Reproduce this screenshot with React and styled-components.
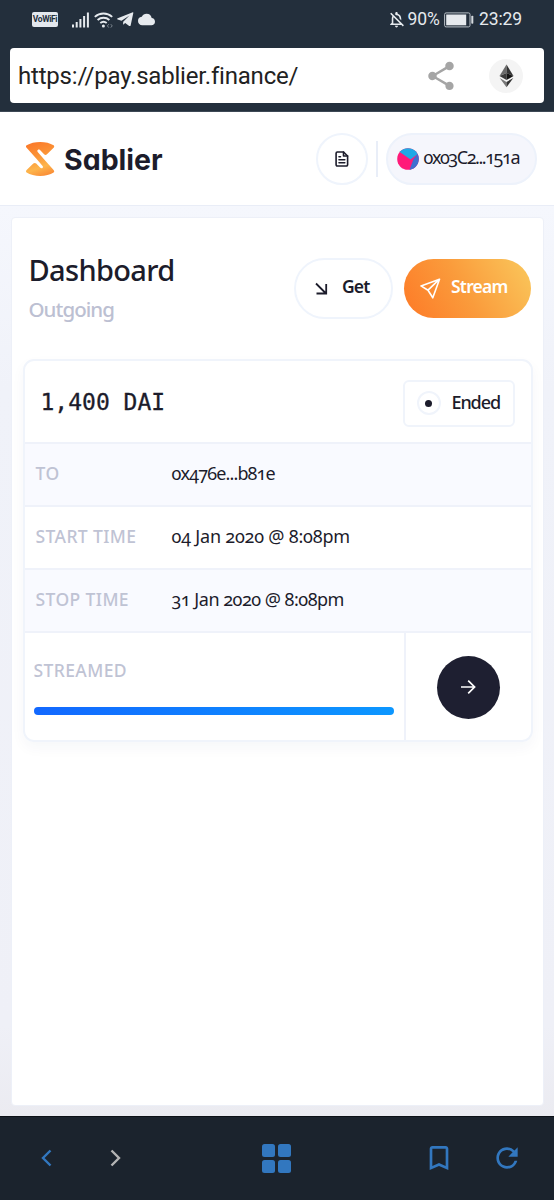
import React from "react";
import styled, { createGlobalStyle, css } from "styled-components";
import {
  MdOutlineNotificationsOff,
  MdShare,
  MdBookmarkBorder,
  MdRefresh,
  MdCloud,
} from "react-icons/md";

const GlobalStyle = createGlobalStyle`
  * {
    box-sizing: border-box;
  }
  body {
    margin: 0;
    background: #f5f7fd;
    font-family: "Noto Sans", "Open Sans", sans-serif;
    color: #1c1c2b;
  }
`;

const Screen = styled.div`
  width: 554px;
  height: 1200px;
  display: flex;
  flex-direction: column;
  overflow: hidden;
`;

const Label = styled.span`
  display: block;
  white-space: nowrap;
  line-height: 1;
  font-size: ${(p) => p.$size || 18}px;
  font-weight: ${(p) => p.$weight || 400};
  letter-spacing: ${(p) => p.$spacing || 0}px;
  color: ${(p) => p.$color || "#1c1c2b"};
  ${(p) =>
    p.$oldstyle &&
    css`
      font-variant-numeric: oldstyle-nums;
    `}
`;

/* ---- browser chrome ---- */

const BrowserTop = styled.div`
  height: 112px;
  flex: none;
  background: #232f3c;
  border-bottom: 1px solid #3d4855;
`;

const StatusBar = styled.div`
  height: 48px;
  padding: 0 32px 9px 32px;
  display: flex;
  align-items: center;
  justify-content: space-between;
  font-family: Roboto, sans-serif;
  color: #e6eaee;

  svg {
    display: block;
  }
`;

const StatusGroup = styled.div`
  display: flex;
  align-items: center;
`;

const VoWifi = styled.div`
  width: 26px;
  height: 15px;
  margin-right: 14px;
  border-radius: 2px;
  background: #e3e8ee;
  color: #232f3c;
  font-size: 8.5px;
  font-weight: 700;
  line-height: 15px;
  text-align: center;
  letter-spacing: -0.4px;
  white-space: nowrap;
`;

const UrlBar = styled.div`
  height: 55px;
  margin: 0 10px;
  padding: 0 21px 0 8px;
  display: flex;
  align-items: center;
  border-radius: 4px;
  background: #fff;
  font-family: Roboto, sans-serif;
`;

const Url = styled(Label)`
  flex: 1;
  padding-top: 1px;
`;

const EthBadge = styled.div`
  width: 34px;
  height: 34px;
  margin-left: 31px;
  border-radius: 50%;
  background: #f4f4f4;
  display: flex;
  align-items: center;
  justify-content: center;
`;

const BrowserNav = styled.div`
  height: 84px;
  flex: none;
  padding: 0 31px 1px 40px;
  display: flex;
  align-items: center;
  background: #1b232d;
  border-top: 1px solid #0c1117;

  svg {
    display: block;
  }
`;

const NavGap = styled.div`
  width: ${(p) => p.$w}px;
  flex: none;
`;

const Tabs = styled.div`
  display: grid;
  grid-template-columns: 13px 13px;
  grid-auto-rows: 13px;
  gap: 3px;
`;

const Tab = styled.div`
  border-radius: 2.5px;
  background: #3277bf;
`;

/* ---- site ---- */

const Header = styled.header`
  height: 94px;
  flex: none;
  padding: 0 17.5px 0 25px;
  display: flex;
  align-items: center;
  background: #fff;
  border-bottom: 1px solid #e9edf7;
`;

const Brand = styled.div`
  flex: 1;
  display: flex;
  align-items: center;
  gap: 9px;
`;

const BrandName = styled(Label)`
  padding-top: 3px;
  font-family: Inter, sans-serif;
  font-feature-settings: "cv11", "ss03";
`;

const RoundButton = styled.div`
  width: 52px;
  height: 52px;
  display: flex;
  align-items: center;
  justify-content: center;
  border: 2px solid #eff4fc;
  border-radius: 50%;
`;

const Divider = styled.div`
  width: 1.5px;
  height: 36px;
  margin: 0 8px 0 8px;
  background: #e9eef8;
`;

const Account = styled.div`
  width: 151px;
  height: 52px;
  padding-left: 9px;
  display: flex;
  align-items: center;
  gap: 5px;
  border: 2px solid #edf2fb;
  border-radius: 26px;
  background: #f5f6fc;
`;

const AccountName = styled(Label)`
  padding-bottom: 3px;
`;

const Body = styled.main`
  flex: 1;
  min-height: 0;
  padding: 11px 10px 10px 11px;
  background: linear-gradient(#f5f7fd, #f0f2f9 20%, #eff0f7 90%, #ebebf1);
`;

const Panel = styled.section`
  height: 889px;
  padding: 40px 10.5px 0;
  background: #fff;
  border: 1px solid #edf0f8;
  border-radius: 4px;
`;

const TitleRow = styled.div`
  display: flex;
  align-items: flex-start;
  padding: 0 1.5px 0 6px;
  height: 101px;
`;

const Titles = styled.div`
  flex: 1;
  display: flex;
  flex-direction: column;
  gap: 15px;
  margin-top: -3px;
`;

const Pill = styled.div`
  display: flex;
  align-items: center;
  border-radius: 31px;

  ${Label} {
    padding-bottom: 3px;
  }

  ${(p) =>
    p.$primary
      ? css`
          width: 127px;
          height: 59px;
          margin: 1px 0 0 11px;
          padding: 0 0 0 16px;
          gap: 10px;
          background: linear-gradient(60deg, #fd7f2a 8%, #fa9c3c 48%, #fac85c);
        `
      : css`
          width: 99px;
          height: 61px;
          padding: 0 0 0 19px;
          gap: 14px;
          border: 2px solid #eff4fc;
        `}
`;

const Card = styled.div`
  height: 383px;
  border: 2px solid #f0f4fb;
  border-radius: 11px;
  box-shadow: 0 6px 14px rgba(30, 50, 90, 0.04);
  overflow: hidden;
`;

const CardHead = styled.div`
  height: 81px;
  padding: 3px 16px 0 16px;
  display: flex;
  align-items: center;
  justify-content: space-between;
`;

const Amount = styled(Label)`
  padding-bottom: 2px;
  font-family: "DejaVu Sans Mono", monospace;
  -webkit-text-stroke: 0.3px currentColor;
`;

const Status = styled.div`
  width: 112px;
  height: 47px;
  padding-left: 12px;
  display: flex;
  align-items: center;
  gap: 11px;
  border: 2px solid #f0f4fb;
  border-radius: 6px;

  ${Label} {
    padding-bottom: 3px;
  }
`;

const Ring = styled.div`
  width: 24px;
  height: 24px;
  display: flex;
  align-items: center;
  justify-content: center;
  border: 2px solid #f0f4fb;
  border-radius: 50%;

  &::after {
    content: "";
    width: 7px;
    height: 7px;
    border-radius: 50%;
    background: #1c1c2b;
  }
`;

const Row = styled.div`
  height: 63px;
  padding: 0 11px 2px;
  display: grid;
  grid-template-columns: 136px 1fr;
  align-items: center;
  border-top: 2px solid #eff2fa;
  background: ${(p) => (p.$tinted ? "#f9faff" : "#fff")};
`;

const RowValue = styled(Label)`
  padding-bottom: 1px;
`;

const CardFoot = styled.div`
  height: 110px;
  display: flex;
  border-top: 2px solid #eff2fa;
`;

const Progress = styled.div`
  width: 381px;
  padding: 29px 10px 0 9px;
  border-right: 2px solid #eff2fa;
`;

const Bar = styled.div`
  height: 8px;
  margin-top: 27px;
  border-radius: 4px;
  background: linear-gradient(90deg, #1268ff, #0c97ff);
`;

const Action = styled.div`
  flex: 1;
  display: flex;
  align-items: center;
  justify-content: center;
`;

const ArrowButton = styled.div`
  width: 63px;
  height: 63px;
  display: flex;
  align-items: center;
  justify-content: center;
  border-radius: 50%;
  background: #1e1f31;
`;

const SignalIcon = () => (
  <svg width="18" height="16" viewBox="0 0 18 16" fill="#e6eaee">
    <rect x="0" y="12.5" width="2" height="3" />
    <rect x="3.7" y="10" width="2" height="5.5" />
    <rect x="7.4" y="7" width="2" height="8.5" />
    <rect x="11.1" y="4" width="2" height="11.5" />
    <rect x="14.9" y="0.5" width="2" height="15" />
  </svg>
);

const WifiIcon = () => (
  <svg width="20" height="16" viewBox="0 0 20 16" fill="none" stroke="#e6eaee" strokeWidth="1.9">
    <path d="M0.8 4.9a13 13 0 0 1 17.4 0" />
    <path d="M3.6 8a9 9 0 0 1 11.8 0" />
    <path d="M6.3 11a5 5 0 0 1 6.4 0" />
    <circle cx="9.4" cy="14" r="1.5" fill="#e6eaee" stroke="none" />
    <path d="M14.8 12.2l-1.4 1.7 1.4 1.7M16.8 12.2l1.4 1.7-1.4 1.7" stroke="#7d8791" strokeWidth="1" />
  </svg>
);

const TelegramIcon = () => (
  <svg width="17" height="15" viewBox="0 0 17 15" fill="#e6eaee">
    <path d="M15.8.3L.7 6.3c-.8.3-.7 1 0 1.2l3.8 1.2L12.5 3.6 6.2 9.7l-.1 3.1 2.1-1.9 4 3c.8.4 1.3.2 1.5-.7L16.3 1c.1-.6-.1-.9-.5-.7z" />
  </svg>
);

const BatteryIcon = () => (
  <svg width="30" height="16" viewBox="0 0 30 16">
    <rect x="0.6" y="0.9" width="25.4" height="14" rx="1.5" fill="none" stroke="#b9c0c7" />
    <rect x="2.2" y="2.5" width="20" height="10.8" fill="#e6eaee" />
    <rect x="27.3" y="3.8" width="2" height="8" rx="0.8" fill="#d5dade" />
  </svg>
);

const EthIcon = () => (
  <svg width="15" height="24" viewBox="0 0 15 24">
    <path d="M7.5 0.5L0.5 12l7-3z" fill="#6a6a6a" />
    <path d="M7.5 0.5L14.5 12l-7-3z" fill="#333" />
    <path d="M0.5 12l7-3v7z" fill="#3a3a3a" />
    <path d="M14.5 12l-7-3v7z" fill="#141414" />
    <path d="M0.7 14l6.8 4v5.3z" fill="#777" />
    <path d="M14.3 14l-6.8 4v5.3z" fill="#333" />
  </svg>
);

const SablierMark = () => (
  <svg width="30" height="36" viewBox="0 0 30 36">
    <defs>
      <linearGradient id="mark" x1="0.3" y1="0" x2="0.6" y2="1">
        <stop offset="0" stopColor="#fb7a2a" />
        <stop offset="0.4" stopColor="#fb9336" />
        <stop offset="0.75" stopColor="#fdb54c" />
        <stop offset="1" stopColor="#fa9038" />
      </linearGradient>
    </defs>
    <path
      d="M1.6 4.300C8.500-.2 22-.2 28.600 4.300c.8.700.8 1.700 0 2.500L22 13.200c-1 .9-2 .9-2.900 0L15 9c-1.600-1.300-3.400.3-2.300 1.900L19 18.300 28.600 29c.8.800.8 1.800 0 2.500C22 36 8.500 36 1.600 31.500c-.8-.7-.8-1.700 0-2.500L8.300 22.600c1-.9 2-.9 2.900 0l4.100 4.200c1.600 1.300 3.400-.3 2.300-1.900L11.200 17.500 1.600 6.800c-.8-.8-.8-1.800 0-2.500z"
      fill="url(#mark)"
    />
  </svg>
);

const DocIcon = () => (
  <svg width="14" height="16" viewBox="0 0 14 16" fill="none" stroke="#1c1c2b" strokeWidth="1.6" strokeLinejoin="round" strokeLinecap="round">
    <path d="M2.3 1h6.200L12.600 5v8.800a1.200 1.200 0 0 1-1.200 1.200H2.300A1.200 1.200 0 0 1 1.100 13.800V2.200A1.200 1.200 0 0 1 2.300 1z" />
    <path d="M8.500 1v4h4.100M4 5.800h1.500M4 8.700h5.800M4 11.700h5.800" />
  </svg>
);

const Avatar = () => (
  <svg width="22" height="22" viewBox="0 0 22 22">
    <defs>
      <clipPath id="avatarClip">
        <circle cx="11" cy="11" r="10.8" />
      </clipPath>
    </defs>
    <g clipPath="url(#avatarClip)">
      <rect width="22" height="22" fill="#ff1a79" />
      <path d="M0 0h22v5L13.500 11.500 2 3.500z" fill="#1fa9e6" />
      <path d="M20.500 6L16.500 11l-4 11H22V5z" fill="#3f6fd0" />
    </g>
  </svg>
);

const rows = [
  { name: "TO", value: "0x476e...b81e", spacing: -0.85 },
  { name: "START TIME", value: "04 Jan 2020 @ 8:08pm", spacing: -0.2 },
  { name: "STOP TIME", value: "31 Jan 2020 @ 8:08pm", spacing: -0.5 },
];

export default function App() {
  return (
    <Screen>
      <GlobalStyle />
      <BrowserTop>
        <StatusBar>
          <StatusGroup>
            <VoWifi>VoWiFi</VoWifi>
            <SignalIcon />
            <NavGap $w={4} />
            <WifiIcon />
            <NavGap $w={3} />
            <TelegramIcon />
            <NavGap $w={4} />
            <MdCloud size={17} />
          </StatusGroup>
          <StatusGroup>
            <MdOutlineNotificationsOff size={19} />
            <NavGap $w={1} />
            <Label $size={17.5} $color="#e6eaee">90%</Label>
            <NavGap $w={4} />
            <BatteryIcon />
            <NavGap $w={5} />
            <Label $size={17.5} $color="#e6eaee" $spacing={-0.1}>23:29</Label>
          </StatusGroup>
        </StatusBar>
        <UrlBar>
          <Url $size={24} $color="#222" $spacing={-0.2}>https://pay.sablier.finance/</Url>
          <MdShare size={34} color="#a5a5a5" />
          <EthBadge>
            <EthIcon />
          </EthBadge>
        </UrlBar>
      </BrowserTop>

      <Header>
        <Brand>
          <SablierMark />
          <BrandName $size={28.5} $weight={700}>Sablier</BrandName>
        </Brand>
        <RoundButton>
          <DocIcon />
        </RoundButton>
        <Divider />
        <Account>
          <Avatar />
          <AccountName $size={18} $oldstyle $spacing={-1.45}>0x03C2...151a</AccountName>
        </Account>
      </Header>

      <Body>
        <Panel>
          <TitleRow>
            <Titles>
              <Label $size={29} $weight={500} $spacing={-0.65}>Dashboard</Label>
              <Label $size={20.5} $weight={500} $color="#bcc0d2" $spacing={-0.95}>Outgoing</Label>
            </Titles>
            <Pill>
              <svg width="13" height="13" viewBox="0 0 13 13" fill="none" stroke="#1c1c2b" strokeWidth="1.8">
                <path d="M1 1.500l10 10M11.200 2v9.500H1.500" />
              </svg>
              <Label $size={17.5} $weight={600} $spacing={-0.9}>Get</Label>
            </Pill>
            <Pill $primary>
              <svg width="21" height="21" viewBox="0 0 21 21" fill="none" stroke="#fff" strokeWidth="1.6" strokeLinejoin="round">
                <path d="M19.500 1.200L1 7.900l7 4.300 4.800 7.600zM19.500 1.200L8 12.200" />
              </svg>
              <Label $size={17.5} $weight={600} $color="#fff" $spacing={-0.8}>Stream</Label>
            </Pill>
          </TitleRow>

          <Card>
            <CardHead>
              <Amount $size={23}>1,400 DAI</Amount>
              <Status>
                <Ring />
                <Label $size={18} $weight={500} $spacing={-1.1}>Ended</Label>
              </Status>
            </CardHead>
            {rows.map((row, i) => (
              <Row key={row.name} $tinted={i % 2 === 0}>
                <Label $size={17.5} $weight={500} $color="#bfc3d4" $spacing={0.4}>{row.name}</Label>
                <RowValue $size={18} $oldstyle $spacing={row.spacing}>{row.value}</RowValue>
              </Row>
            ))}
            <CardFoot>
              <Progress>
                <Label $size={17.5} $weight={500} $color="#bfc3d4" $spacing={0.4}>STREAMED</Label>
                <Bar />
              </Progress>
              <Action>
                <ArrowButton>
                  <svg width="16" height="16" viewBox="0 0 16 16" fill="none" stroke="#fff" strokeWidth="1.7">
                    <path d="M1 8h13.500M8.200 1.600L14.600 8l-6.400 6.400" />
                  </svg>
                </ArrowButton>
              </Action>
            </CardFoot>
          </Card>
        </Panel>
      </Body>

      <BrowserNav>
        <svg width="13" height="18" viewBox="0 0 13 18" fill="none" stroke="#3277bf" strokeWidth="2.4">
          <path d="M10.500 1.500L3 9l7.500 7.500" />
        </svg>
        <NavGap $w={56} />
        <svg width="13" height="18" viewBox="0 0 13 18" fill="none" stroke="#b4b4b4" strokeWidth="2.4">
          <path d="M2.500 1.500L10 9l-7.500 7.500" />
        </svg>
        <NavGap $w={140} />
        <Tabs>
          <Tab />
          <Tab />
          <Tab />
          <Tab />
        </Tabs>
        <NavGap $w={132} />
        <MdBookmarkBorder size={32} color="#3277bf" />
        <NavGap $w={36} />
        <MdRefresh size={32} color="#3277bf" />
      </BrowserNav>
    </Screen>
  );
}
